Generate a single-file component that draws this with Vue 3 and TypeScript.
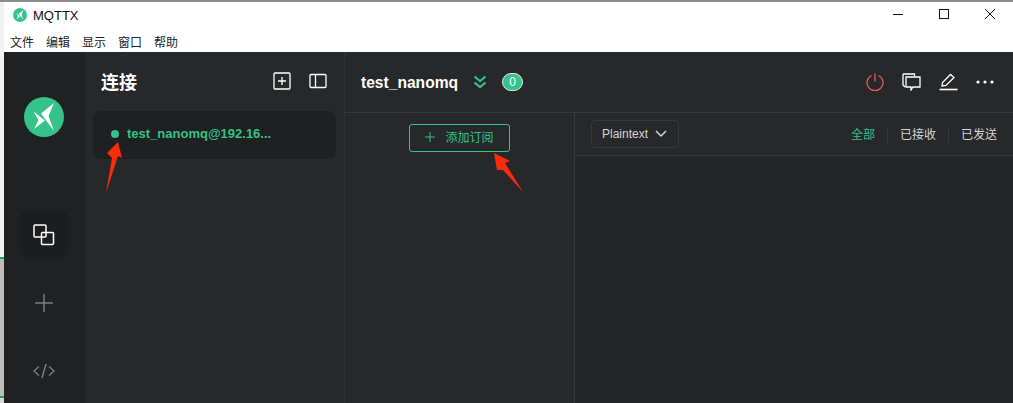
<script setup lang="ts">
const menus: string[] = ['文件', '编辑', '显示', '窗口', '帮助']
const tabs: string[] = ['全部', '已接收', '已发送']
</script>

<template>
  <div class="shot">
    <div class="edge"></div>
    <div class="win">
      <div class="titlebar">
        <div class="title-left">
          <svg class="app-ico" width="14" height="14" viewBox="0 0 40 40">
            <circle cx="20" cy="20" r="20" fill="#34c388" />
            <path d="M9.500 14.500L21 23.500L10 32L14.500 23Z M30 6L17 16.500L30 34L24.500 19Z" fill="#fff" />
          </svg>
          <span>MQTTX</span>
        </div>
        <div class="winbtns">
          <svg width="12" height="12" viewBox="0 0 12 12"><path d="M1 6.500H11" stroke="#111" fill="none" /></svg>
          <svg width="12" height="12" viewBox="0 0 12 12"><rect x="1.500" y="1.500" width="9" height="9" stroke="#111" fill="none" /></svg>
          <svg width="12" height="12" viewBox="0 0 12 12"><path d="M1 1L11 11M11 1L1 11" stroke="#111" fill="none" /></svg>
        </div>
      </div>
      <div class="menubar">
        <span v-for="m in menus" :key="m">{{ m }}</span>
      </div>

      <div class="app">
        <nav class="rail">
          <svg class="logo" width="40" height="40" viewBox="0 0 40 40">
            <circle cx="20" cy="20" r="20" fill="#34c388" />
            <path d="M9.500 14.500L21 23.500L10 32L14.500 23Z M30 6L17 16.500L30 34L24.500 19Z" fill="#fff" />
          </svg>
          <div class="rail-btn active">
            <svg width="22" height="22" viewBox="0 0 22 22" fill="none" stroke="#fff" stroke-width="1.500">
              <rect x="1" y="1" width="12" height="12" rx="1" />
              <rect x="8.500" y="8.500" width="12" height="12" rx="1" />
            </svg>
          </div>
          <div class="rail-btn">
            <svg width="20" height="20" viewBox="0 0 20 20" fill="none" stroke="#7b7c7d" stroke-width="1.500">
              <path d="M10 1V19M1 10H19" />
            </svg>
          </div>
          <div class="rail-btn">
            <svg width="22" height="16" viewBox="0 0 22 16" fill="none" stroke="#7b7c7d" stroke-width="1.500">
              <path d="M6 3.500L1 8L6 12.500M16 3.500L21 8L16 12.500M13 1L9 15" />
            </svg>
          </div>
        </nav>

        <aside class="list">
          <div class="list-head">
            <h1>连接</h1>
            <div class="head-icons">
              <svg width="18" height="18" viewBox="0 0 18 18" fill="none" stroke="#fff" stroke-width="1.300">
                <rect x="1" y="1" width="16" height="16" rx="1" />
                <path d="M9 5V13M5 9H13" />
              </svg>
              <svg width="18" height="16" viewBox="0 0 18 16" fill="none" stroke="#fff" stroke-width="1.300">
                <rect x="1" y="1.500" width="16" height="13" rx="1" />
                <path d="M6.500 1.500V14.500" />
              </svg>
            </div>
          </div>
          <div class="conn">
            <i class="dot"></i>
            <span>test_nanomq@192.16...</span>
          </div>
        </aside>

        <main class="main">
          <header class="main-head">
            <div class="name">
              <strong>test_nanomq</strong>
              <svg width="14" height="14" viewBox="0 0 14 14" fill="none" stroke="#34c388" stroke-width="2.200">
                <path d="M1.500 1.500L7 6L12.500 1.500M1.500 7.500L7 12L12.500 7.500" />
              </svg>
              <span class="badge">0</span>
            </div>
            <div class="actions">
              <svg width="18" height="18" viewBox="0 0 18 18" fill="none" stroke="#e25c5c" stroke-width="1.300">
                <path d="M5.500 2.500A8 8 0 1 0 12.500 2.500M9 0.500V8.500" />
              </svg>
              <svg width="19" height="18" viewBox="0 0 19 18" fill="none" stroke="#fff" stroke-width="1.300">
                <path d="M12.500 3V1H1.500L1 2V12L3 14" />
                <path d="M4 4H18V14H11L9 17V14H4Z" />
              </svg>
              <svg width="19" height="18" viewBox="0 0 19 18" fill="none" stroke="#fff" stroke-width="1.300">
                <path d="M3 13L3.500 9.500L11.500 1.500L15 4.500L7 12.500Z" />
                <path d="M0.500 16.500H18.500" stroke-width="1.600" />
              </svg>
              <svg width="18" height="4" viewBox="0 0 18 4" fill="#fff">
                <circle cx="2" cy="2" r="1.600" /><circle cx="9" cy="2" r="1.600" /><circle cx="16" cy="2" r="1.600" />
              </svg>
            </div>
          </header>
          <div class="body">
            <section class="subs">
              <button class="add">
                <svg width="10" height="10" viewBox="0 0 10 10" stroke="#34c388" fill="none"><path d="M5 0V10M0 5H10" /></svg>
                <span>添加订阅</span>
              </button>
            </section>
            <section class="msgs">
              <div class="toolbar">
                <div class="select">
                  <span>Plaintext</span>
                  <svg width="12" height="8" viewBox="0 0 12 8" fill="none" stroke="#d5d6d6" stroke-width="1.500"><path d="M1 1L6 6L11 1" /></svg>
                </div>
                <div class="tabs">
                  <span v-for="(t, i) in tabs" :key="t" :class="{ on: i === 0 }">{{ t }}</span>
                </div>
              </div>
              <div class="msg-area"></div>
            </section>
          </div>
        </main>
      </div>
    </div>

    <svg class="arrow a1" width="20" height="56" viewBox="0 0 20 56">
      <path d="M13 1L17 17L13 15L1 52L7 17L2 12Z" fill="#fa2c0c" />
    </svg>
    <svg class="arrow a2" width="34" height="42" viewBox="0 0 34 42">
      <path d="M0 0L16 8L11 10L29 39L9 17L3 17Z" fill="#fa2c0c" />
    </svg>
  </div>
</template>

<style>
html, body { margin: 0; background: #fff; }
</style>

<style scoped>
.shot {
  position: relative;
  display: flex;
  width: 1013px;
  height: 403px;
  overflow: hidden;
  font-family: "Liberation Sans", "Noto Sans CJK SC", sans-serif;
}
.edge {
  width: 4px;
  flex: none;
  background: linear-gradient(#8c8c8c 0 2px, #f2f2f2 2px 257px, #11a75a 257px 259px, #bdbdbd 259px 396px, #11a75a 396px 398px, #d8d8d8 398px);
}
.win {
  flex: 1;
  min-width: 0;
  display: flex;
  flex-direction: column;
  border-top: 2px solid #8c8c8c;
}
.titlebar {
  height: 28px;
  flex: none;
  display: flex;
  justify-content: space-between;
  align-items: center;
  background: #fff;
}
.title-left {
  display: flex;
  align-items: center;
  gap: 6px;
  padding: 0 0 2px 9px;
  font-size: 13px;
  color: #111;
}
.winbtns {
  display: flex;
  gap: 34px;
  padding: 0 17px 4px 0;
}
.menubar {
  height: 22px;
  flex: none;
  display: flex;
  gap: 12px;
  padding-left: 6px;
  background: #fff;
  font-size: 12px;
  line-height: 26px;
  color: #222;
}
.app {
  flex: 1;
  min-height: 0;
  display: flex;
  background: #26282a;
}
.rail {
  width: 81px;
  flex: none;
  box-sizing: border-box;
  padding-right: 1px;
  display: flex;
  flex-direction: column;
  align-items: center;
  overflow: hidden;
  background: #1f2123;
}
.logo {
  flex: none;
  margin-top: 45px;
}
.rail-btn {
  flex: none;
  width: 48px;
  height: 48px;
  display: flex;
  align-items: center;
  justify-content: center;
  border-radius: 8px;
  margin-bottom: 20px;
}
.rail-btn.active {
  margin-top: 74px;
  background: #1c1d1f;
}
.list {
  width: 260px;
  flex: none;
  box-sizing: border-box;
  padding: 0 8px;
  border-right: 1px solid #303234;
}
.list-head {
  height: 59px;
  display: flex;
  align-items: center;
  justify-content: space-between;
  padding: 0 0 2px 8px;
  box-sizing: border-box;
}
h1 {
  margin: 0;
  font-size: 18px;
  font-weight: 700;
  color: #fff;
}
.head-icons {
  display: flex;
  align-items: center;
  gap: 18px;
  padding-right: 9px;
}
.conn {
  height: 48px;
  display: flex;
  align-items: center;
  gap: 8px;
  padding: 0 0 3px 18px;
  box-sizing: border-box;
  border-radius: 8px;
  background: #1e2022;
  color: #34c388;
  font-size: 13px;
  font-weight: 700;
}
.dot {
  width: 8px;
  height: 8px;
  margin-top: 1px;
  border-radius: 50%;
  background: #34c388;
}
.main {
  flex: 1;
  min-width: 0;
  display: flex;
  flex-direction: column;
}
.main-head {
  height: 61px;
  flex: none;
  box-sizing: border-box;
  display: flex;
  align-items: center;
  justify-content: space-between;
  padding: 0 19px 0 16px;
  border-bottom: 1px solid #363839;
}
.name {
  display: flex;
  align-items: center;
  gap: 15px;
}
.name strong {
  font-size: 15.600px;
  color: #fff;
  padding-top: 1px;
}
.badge {
  width: 21px;
  height: 18px;
  border: 1px solid #e6e6e6;
  border-radius: 9px;
  box-sizing: border-box;
  background: #34c388;
  color: #fff;
  font-size: 12px;
  line-height: 16px;
  text-align: center;
}
.actions {
  display: flex;
  align-items: center;
  gap: 18px;
}
.body {
  flex: 1;
  min-height: 0;
  display: flex;
}
.subs {
  width: 230px;
  flex: none;
  box-sizing: border-box;
  border-right: 1px solid #363839;
  display: flex;
  justify-content: center;
  align-items: flex-start;
  padding: 11px 1px 0 0;
}
.add {
  width: 101px;
  height: 28px;
  display: flex;
  align-items: center;
  justify-content: center;
  gap: 10px;
  padding: 0 0 3px 1px;
  border: 1px solid #34c388;
  border-radius: 3px;
  background: transparent;
  color: #34c388;
  font: 12px "Liberation Sans", "Noto Sans CJK SC", sans-serif;
}
.msgs {
  flex: 1;
  min-width: 0;
  display: flex;
  flex-direction: column;
}
.toolbar {
  height: 43px;
  flex: none;
  box-sizing: border-box;
  display: flex;
  align-items: center;
  justify-content: space-between;
  padding: 0 16px;
  border-bottom: 1px solid #363839;
}
.select {
  width: 88px;
  height: 28px;
  box-sizing: border-box;
  display: flex;
  align-items: center;
  justify-content: space-between;
  padding: 0 11px 0 10px;
  border: 1px solid #363839;
  border-radius: 4px;
  color: #d5d6d6;
  font-size: 12px;
}
.tabs {
  display: flex;
  padding-top: 2px;
  font-size: 12px;
  color: #d5d6d6;
}
.tabs span {
  padding: 0 12px;
  line-height: 16px;
  border-left: 1px solid #363839;
}
.tabs span:first-child { border-left: 0; }
.tabs span:last-child { padding-right: 0; }
.tabs .on { color: #34c388; }
.msg-area {
  flex: 1;
  background: #232527;
}
.arrow { position: absolute; }
.a1 { left: 105px; top: 141px; }
.a2 { left: 494px; top: 153px; }
</style>
